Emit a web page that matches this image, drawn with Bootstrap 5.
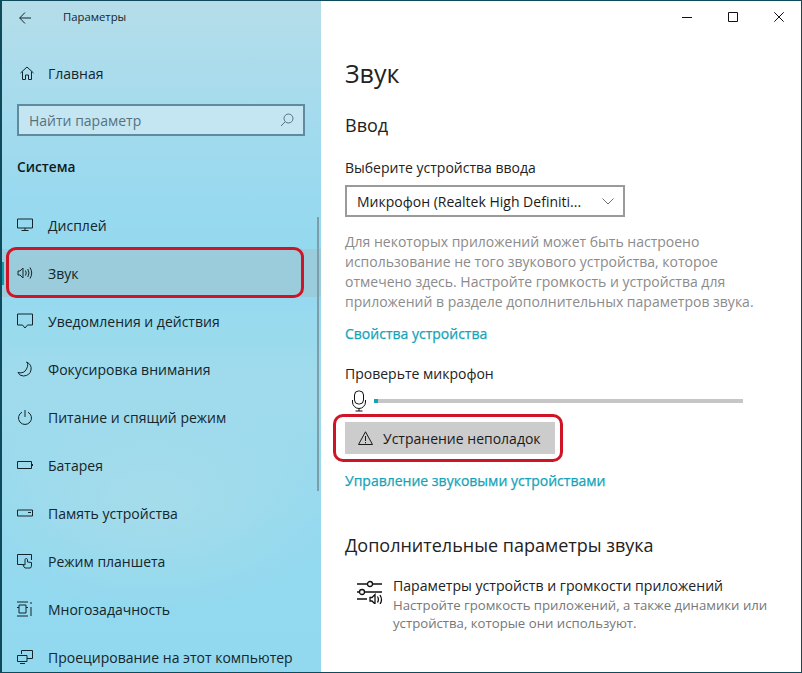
<!DOCTYPE html>
<html lang="ru">
<head>
    <meta charset="UTF-8">
    <meta name="viewport" content="width=device-width, initial-scale=1.0">
    <title>Параметры</title>
    <link rel="stylesheet" href="https://cdn.jsdelivr.net/npm/bootstrap@5.3.3/dist/css/bootstrap.min.css">
    <style>
        html, body { height: 100%; overflow: hidden; }
        body { font-family: "Open Sans", "Noto Sans", sans-serif; color: #1a1a1a; background: #fff; }
        svg { display: block; fill: none; stroke: currentColor; stroke-width: 1; flex: none; }

        .win { width: 802px; height: 673px; border: solid #0f4a5c; border-width: 1px 1px 1px 2px; overflow: hidden; }

        .side { width: 319px; height: 100%; flex: none; position: relative; color: #14262c;
            background: radial-gradient(ellipse 200px 110px at 150px 500px, #a6dcea 0%, transparent 100%),
                linear-gradient(180deg, #b5dde9 0%, #abdcec 10%, #9ad9ef 28%, #93d9ef 40%, #a0dbec 58%, #93d9ef 78%, #92d8ee 100%); }
        .side-title { height: 33px; padding-left: 17px; }
        .side-title span { font-size: 11.3px; margin-left: 32px; }
        .side-home { height: 40px; margin-top: 19px; padding-left: 18px; font-size: 14px; }
        .side-home svg { margin-right: 14px; }
        .side-search { width: 288px; height: 32px; margin: 11px 0 0 15px; padding: 0 9px 0 10px; border: 2px solid #5f8b9c;
            background: #c4e6f3; color: #56727e; font-size: 14px; }
        .side-head { margin: 19px 0 0 15px; font-size: 13.7px; font-weight: 600; line-height: 24px; color: #0d1c22; }
        .side-list { margin-top: 22px; }
        .side-item { height: 48px; padding-left: 15px; font-size: 14px; white-space: nowrap; position: relative; }
        .side-item svg { margin-right: 15px; }
        .side-item.on { background: #9accdc; }
        .side-item.on::before { content: ""; position: absolute; left: -2px; top: 13px; width: 4px; height: 23px; background: #1496ad; }
        .side-bar { position: absolute; right: 2px; top: 216px; width: 2px; height: 274px; background: #7c9eaa; }

        .ring { position: absolute; border: 3px solid #cf1427; border-radius: 10px; pointer-events: none; }
        .ring-side { left: 6px; top: 247px; width: 298px; height: 51px; }
        .ring-btn { left: -12px; top: -8px; width: 230px; height: 48px; }

        .main { position: relative; padding: 0 0 0 24px; }
        .win-ctl { height: 32px; margin-left: -24px; padding-right: 17px; gap: 36px; color: #111; }
        .main-title { font-size: 25px; font-weight: 400; line-height: 38px; margin: 21px 0 0; color: #222; }
        .main-sub { font-size: 18px; font-weight: 400; line-height: 28px; margin: 19px 0 0; color: #222; }
        .lbl { font-size: 14px; line-height: 20px; color: #222; }
        .lbl-first { margin-top: 19px; }
        .lbl-test { margin-top: 20px; }
        .dd { width: 280px; height: 32px; margin-top: 7px; padding: 0 9px 0 10px; border: 2px solid #9a9a9a; font-size: 14px; white-space: nowrap; }
        .note { width: 430px; margin: 15px 0 0; font-size: 14px; line-height: 20px; color: #8b8b8b; white-space: nowrap; }
        .lnk { color: #14a3b8; font-size: 14px; line-height: 20px; font-weight: 500; -webkit-text-stroke: .25px #14a3b8; text-decoration: none; display: block; white-space: nowrap; }
        .lnk-prop { margin-top: 12px; }
        .lnk-manage { margin-top: 17px; }
        .mic-row { height: 24px; margin-top: 5px; padding-left: 7px; width: 398px; }
        .mic-row svg { color: #111; }
        .mic-track { height: 4px; margin-left: 8px; background: #c6c6c6; position: relative; flex: 1 1 auto; }
        .mic-track i { position: absolute; left: 0; top: 0; width: 4px; height: 4px; background: #14a3b8; }
        .fix-wrap { position: relative; width: 210px; margin-top: 9px; }
        .fix-btn { width: 210px; height: 32px; padding: 0 0 0 13px; border: 0; border-radius: 0; background: #cccccc; color: #1a1a1a; font-size: 14px; }
        .fix-btn svg { margin-right: 10px; }
        .adv { font-size: 18px; line-height: 28px; font-weight: 400; margin: 40px 0 0; color: #222; }
        .opt { margin-top: 17px; padding-left: 12px; }
        .opt svg { margin: 4px 10px 0 0; stroke-width: 1.3; color: #111; }
        .opt-title { font-size: 14.1px; line-height: 20px; color: #222; white-space: nowrap; }
        .opt-sub { font-size: 13.2px; line-height: 18px; color: #777; white-space: nowrap; }
    </style>
</head>

<body>
    <div class="win d-flex">
        <div class="side">
            <div class="side-title d-flex align-items-center">
                <svg width="12" height="12" viewBox="0 0 12 12"><path d="M6 .5.700 6 6 11.500M.700 6H12"/></svg>
                <span>Параметры</span>
            </div>
            <div class="side-home d-flex align-items-center">
                <svg width="14" height="14" viewBox="0 0 14 14"><path d="M.5 7 7 1l6.500 6M2.500 5.500v8h3V9h3v4.500h3v-8"/></svg>
                <span>Главная</span>
            </div>
            <div class="side-search d-flex align-items-center justify-content-between">
                <span>Найти параметр</span>
                <svg width="14" height="14" viewBox="0 0 14 14"><circle cx="8.500" cy="5.500" r="4.500"/><path d="M5.200 8.800 1 13"/></svg>
            </div>
            <div class="side-head">Система</div>
            <div class="side-list">
                <div class="side-item d-flex align-items-center">
                    <svg width="16" height="14" viewBox="0 0 16 14"><path d="M.5 1h15v9H.5zM8 10v2.500M4.500 12.500h7"/></svg>
                    <span>Дисплей</span>
                </div>
                <div class="side-item on d-flex align-items-center">
                    <svg width="16" height="14" viewBox="0 0 16 14"><path d="M1 5v4h2l3 3V2L3 5zM8.500 4.500q1.500 2.500 0 5M10.800 3q2.400 4 0 8M13 1.500q3.400 5.500 0 11"/></svg>
                    <span>Звук</span>
                </div>
                <div class="side-item d-flex align-items-center">
                    <svg width="16" height="16" viewBox="0 0 16 16"><path d="M.5 1h15v11h-5L8 15l-2.500-3H.5z"/></svg>
                    <span>Уведомления и действия</span>
                </div>
                <div class="side-item d-flex align-items-center">
                    <svg width="16" height="16" viewBox="0 0 16 16"><path d="M9.500 1q5.500 2.500 4.500 8t-7.500 6Q2.500 15 1 11.500q6 1.500 8.500-3.500t0-7z"/></svg>
                    <span>Фокусировка внимания</span>
                </div>
                <div class="side-item d-flex align-items-center">
                    <svg width="16" height="16" viewBox="0 0 16 16"><path d="M8 1v7M5 3.200a6.500 6.500 0 1 0 6 0"/></svg>
                    <span>Питание и спящий режим</span>
                </div>
                <div class="side-item d-flex align-items-center">
                    <svg width="16" height="10" viewBox="0 0 16 10"><path d="M.5 1.500h14v7H.5zM15.500 4v2"/></svg>
                    <span>Батарея</span>
                </div>
                <div class="side-item d-flex align-items-center">
                    <svg width="16" height="8" viewBox="0 0 16 8"><path d="M.5 1h15v6H.5zM11 3.500h3"/></svg>
                    <span>Память устройства</span>
                </div>
                <div class="side-item d-flex align-items-center">
                    <svg width="16" height="16" viewBox="0 0 16 16"><path d="M6 11.500H.5v-10h14V7M8 15q-2-2-2-3.500l2 .5V6.500a1.300 1.300 0 0 1 2.500 0V9l4 .5V12q0 2-1 3z"/></svg>
                    <span>Режим планшета</span>
                </div>
                <div class="side-item d-flex align-items-center">
                    <svg width="16" height="16" viewBox="0 0 16 16"><path d="M0 1h11M0 15h11M2 4h7v8H2zM0 6.500h2M9 6.500h2M14 1v2M14 6v9"/></svg>
                    <span>Многозадачность</span>
                </div>
                <div class="side-item d-flex align-items-center">
                    <svg width="16" height="14" viewBox="0 0 16 14"><path d="M4.500 4V.5h11v8H10M.5 5.500H10v6H.5zM3 13.500h5"/></svg>
                    <span>Проецирование на этот компьютер</span>
                </div>
            </div>
            <div class="side-bar"></div>
        </div>

        <div class="main flex-grow-1">
            <div class="win-ctl d-flex align-items-center justify-content-end">
                <svg width="10" height="10" viewBox="0 0 10 10"><path d="M0 5.500h10"/></svg>
                <svg width="10" height="10" viewBox="0 0 10 10"><path d="M.5.500h9v9H.5z"/></svg>
                <svg width="10" height="10" viewBox="0 0 10 10"><path d="m.3.300 9.400 9.400M9.700.300.3 9.700"/></svg>
            </div>
            <h1 class="main-title">Звук</h1>
            <h2 class="main-sub">Ввод</h2>
            <div class="lbl lbl-first">Выберите устройства ввода</div>
            <div class="dd d-flex align-items-center justify-content-between">
                <span>Микрофон (Realtek High Definiti...</span>
                <svg width="12" height="7" viewBox="0 0 12 7" class="text-secondary"><path d="m.5.500 5.500 5.500 5.500-5.500"/></svg>
            </div>
            <p class="note">Для некоторых приложений может быть настроено<br>использование не того звукового устройства, которое<br>отмечено здесь. Настройте громкость и устройства для<br>приложений в разделе дополнительных параметров звука.</p>
            <a class="lnk lnk-prop" href="#">Свойства устройства</a>
            <div class="lbl lbl-test">Проверьте микрофон</div>
            <div class="mic-row d-flex align-items-center">
                <svg width="14" height="22" viewBox="0 0 14 22"><rect x="2.500" y="1" width="9" height="13" rx="4"/><path d="M.5 10v2a6.500 6.500 0 0 0 13 0v-2M7 18.500V21M3.500 21h7"/></svg>
                <div class="mic-track"><i></i></div>
            </div>
            <div class="fix-wrap">
                <button class="btn fix-btn d-flex align-items-center" type="button">
                    <svg width="15" height="14" viewBox="0 0 15 14"><path d="M7.500.8 14.500 13.500H.5zM7.500 5v5M7.500 11v1.300"/></svg>
                    Устранение неполадок
                </button>
                <div class="ring ring-btn"></div>
            </div>
            <a class="lnk lnk-manage" href="#">Управление звуковыми устройствами</a>
            <h2 class="adv">Дополнительные параметры звука</h2>
            <div class="opt d-flex align-items-start">
                <svg width="26" height="24" viewBox="0 0 26 24"><path d="M0 4h10.500M15.500 4H25M0 12h2.500M7.500 12H25M0 19h10"/><circle cx="13" cy="4" r="2.500"/><circle cx="5" cy="12" r="2.500"/><path d="M13 17.500v3.500h2l3 3V14.500l-3 3zM20.500 16.500q1.800 3 0 6M23 15q3 5 0 9"/></svg>
                <div>
                    <div class="opt-title">Параметры устройств и громкости приложений</div>
                    <div class="opt-sub">Настройте громкость приложений, а также динамики или<br>устройства, которые они используют.</div>
                </div>
            </div>
        </div>
        <div class="ring ring-side"></div>
    </div>

    <script src="https://cdn.jsdelivr.net/npm/bootstrap@5.3.3/dist/js/bootstrap.bundle.min.js"></script>
</body>
</html>
